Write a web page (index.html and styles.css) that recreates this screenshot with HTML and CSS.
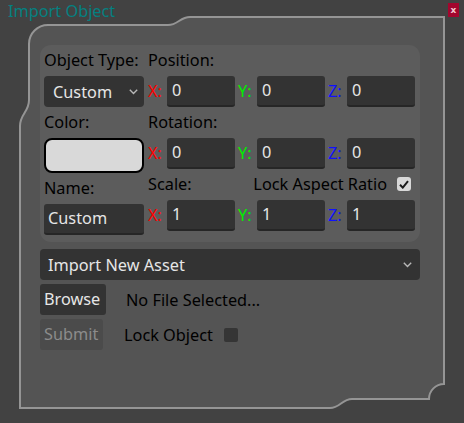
FILE: index.html
```html
<!DOCTYPE html>
<html lang="en">
<head>
<meta charset="utf-8">
<title>Import Object</title>
<link rel="stylesheet" href="styles.css">
</head>
<body>
<div class="window">
  <svg class="frame" width="464" height="423" viewBox="0 0 464 423" aria-hidden="true">
    <path d="M29 44 A19 19 0 0 1 48 25 L168 25 C178 25 180 17 190 17 L444 17 L444 384 A15 15 0 0 0 429 399 L352 399 C342 399 340 408 330 408 L20 408 L20 126 C20 114 29 112 29 100 Z" fill="#545454" stroke="#959595" stroke-width="2"/>
  </svg>
  <header class="titlebar">
    <span class="title">Import Object</span>
    <button class="close" type="button">x</button>
  </header>
  <main class="content">
    <section class="panel">
      <div class="col-main">
        <div class="label">Object Type:</div>
        <div class="select">
          <span>Custom</span>
          <svg class="chev" width="9" height="6" viewBox="0 0 9 6"><polyline points="0.8,0.8 4.5,4.5 8.2,0.8" fill="none" stroke="#b8b8b8" stroke-width="1.4"/></svg>
        </div>
        <div class="label">Color:</div>
        <div class="swatch"></div>
        <div class="label">Name:</div>
        <div class="field name">Custom</div>
      </div>
      <div class="col-xyz">
        <div class="label span3">Position:</div>
        <div class="axis"><span class="ax x">X:</span><span class="field">0</span></div>
        <div class="axis"><span class="ax y">Y:</span><span class="field">0</span></div>
        <div class="axis"><span class="ax z">Z:</span><span class="field">0</span></div>
        <div class="label span3">Rotation:</div>
        <div class="axis"><span class="ax x">X:</span><span class="field">0</span></div>
        <div class="axis"><span class="ax y">Y:</span><span class="field">0</span></div>
        <div class="axis"><span class="ax z">Z:</span><span class="field">0</span></div>
        <div class="label">Scale:</div>
        <div class="label lockar"><span>Lock Aspect Ratio</span><span class="check on"><svg width="10" height="9" viewBox="0 0 10 9"><path d="M1 4.8 L3.8 7.6 L9 1.2" fill="none" stroke="#1a1a1a" stroke-width="2"/></svg></span></div>
        <div class="axis"><span class="ax x">X:</span><span class="field">1</span></div>
        <div class="axis"><span class="ax y">Y:</span><span class="field">1</span></div>
        <div class="axis"><span class="ax z">Z:</span><span class="field">1</span></div>
      </div>
    </section>
    <div class="select wide">
      <span>Import New Asset</span>
      <svg class="chev" width="9" height="6" viewBox="0 0 9 6"><polyline points="0.8,0.8 4.5,4.5 8.2,0.8" fill="none" stroke="#b8b8b8" stroke-width="1.4"/></svg>
    </div>
    <div class="row">
      <button class="btn" type="button">Browse</button>
      <span class="text browse-text">No File Selected...</span>
    </div>
    <div class="row">
      <button class="btn disabled" type="button">Submit</button>
      <span class="text lock-text">Lock Object</span>
      <span class="check"></span>
    </div>
  </main>
</div>
</body>
</html>
```
FILE: styles.css
```css
* { box-sizing: border-box; }
html, body {
  margin: 0;
  padding: 0;
  background: #424242;
}
body {
  font-family: "Noto Sans", "Open Sans", sans-serif;
  font-size: 16.3px;
  color: #000;
}
.window {
  position: relative;
  width: 464px;
  height: 423px;
  overflow: hidden;
}
.frame {
  position: absolute;
  left: 0;
  top: 0;
}
.titlebar {
  position: relative;
  display: flex;
  justify-content: space-between;
  align-items: flex-start;
  height: 20px;
  padding: 0 5px 0 8px;
}
.title {
  color: #058080;
  font-size: 16.3px;
  line-height: 22px;
}
.close {
  margin-top: 3px;
  width: 11px;
  height: 14px;
  padding: 0;
  border: 0;
  background: #a3062e;
  color: #f2c6cf;
  font-family: "DejaVu Sans", sans-serif;
  font-size: 9px;
  font-weight: bold;
  line-height: 13px;
  text-align: center;
}
.content {
  position: relative;
  padding: 25px 44px 0 40px;
  display: flex;
  flex-direction: column;
}
.panel {
  display: flex;
  gap: 4px;
  width: 380px;
  padding: 0 5px 7px 4px;
  background: #5c5c5c;
  border-radius: 11px;
}
.col-main {
  width: 100px;
  display: flex;
  flex-direction: column;
}
.label {
  line-height: 24px;
  margin: 3px 0 4px;
  white-space: nowrap;
}
.select {
  display: flex;
  align-items: center;
  justify-content: space-between;
  height: 31px;
  padding: 0 6px 0 9px;
  background: #333333;
  border-radius: 4px;
  color: #e6e6e6;
}
.select.wide {
  margin-top: 7px;
  padding: 0 8px 0 8px;
}
.swatch {
  height: 35px;
  background: #d9d9d9;
  border: 2px solid #000;
  border-radius: 8px;
}
.field {
  display: block;
  height: 31px;
  line-height: 29px;
  padding-left: 5px;
  background: #333333;
  border-bottom: 2px solid #262626;
  border-radius: 3px;
  color: #e6e6e6;
}
.field.name {
  padding-left: 4px;
}
.col-xyz {
  display: grid;
  grid-template-columns: repeat(3, 87px);
  column-gap: 3px;
  align-content: start;
}
.span3 { grid-column: span 3; }
.lockar {
  grid-column: span 2;
  display: flex;
  justify-content: flex-end;
  align-items: center;
  gap: 10px;
  padding-right: 4px;
}
.axis {
  display: flex;
}
.axis .field {
  flex: 1;
}
.ax {
  width: 19px;
  line-height: 31px;
}
.ax.x { color: #ff0000; }
.ax.y { color: #00ee00; }
.ax.z { color: #1010ff; }
.check {
  display: inline-flex;
  align-items: center;
  justify-content: center;
  width: 14px;
  height: 14px;
  background: #353535;
  border-radius: 2px;
}
.check.on {
  background: #d8d8d8;
  border-radius: 3px;
}
.row {
  display: flex;
  align-items: center;
  margin-top: 4px;
}
.btn {
  height: 31px;
  padding: 0 4px;
  border: 0;
  border-radius: 3px;
  background: #333333;
  color: #e6e6e6;
  font-family: "Noto Sans", "Open Sans", sans-serif;
  font-size: 16.3px;
  line-height: 31px;
  width: 66px;
  text-align: left;
}
.btn.disabled {
  width: 63px;
  background: #4b4b4b;
  color: #8c8c8c;
}
.browse-text { margin-left: 20px; }
.lock-text { margin-left: 21px; margin-right: 11px; }
```
